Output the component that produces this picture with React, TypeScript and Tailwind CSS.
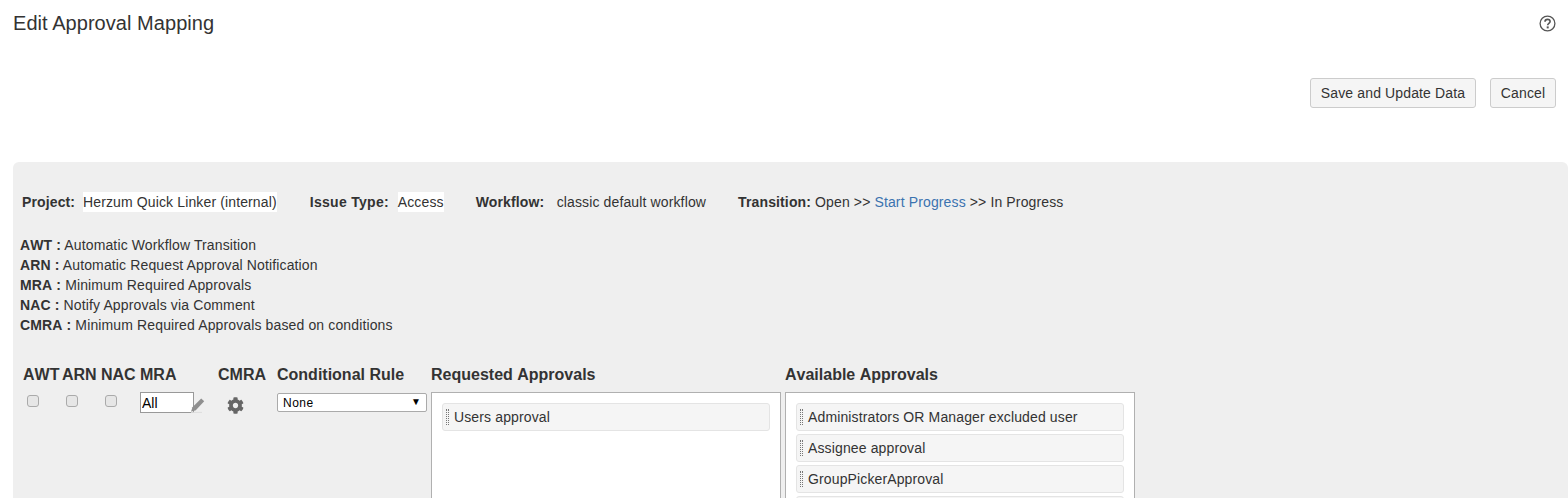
import React from 'react';
import { FaCog } from 'react-icons/fa';

// legend shown above the mapping table
const legend = [
  ['AWT', 'Automatic Workflow Transition'],
  ['ARN', 'Automatic Request Approval Notification'],
  ['MRA', 'Minimum Required Approvals'],
  ['NAC', 'Notify Approvals via Comment'],
  ['CMRA', 'Minimum Required Approvals based on conditions'],
];

const available = ['Administrators OR Manager excluded user', 'Assignee approval', 'GroupPickerApproval', ''];

const Approval = ({ label }: { label: string }) => (
  <div className="flex h-[28px] shrink-0 items-center rounded-[3px] border border-[#e4e4e4] bg-[#f5f5f5] pl-[3px]">
    <span className="h-[16px] w-[3px] border-x border-dotted border-[#777]" />
    <span className="ml-[5px]">{label}</span>
  </div>
);

const Check = () => (
  <div className="pl-[4px] pt-[3px]">
    <input type="checkbox" className="block h-[12px] w-[12px] appearance-none rounded-[3px] border border-[#aaa] bg-[#e6e6e6]" />
  </div>
);

const App = () => {
  return (
    <div className="h-[498px] overflow-hidden bg-white font-['Liberation_Sans',Arial,sans-serif] text-[14px] leading-[20px] tracking-[0.13px] text-[#333]">
      <div className="flex h-[46px] items-center justify-between pl-[13px] pr-[12px]">
        <h1 className="text-[20px] leading-[22px] tracking-[0.05px]">Edit Approval Mapping</h1>
        <svg width="17" height="17" viewBox="0 0 17 17" fill="none" className="text-[#555]">
          <circle cx="8.5" cy="8.5" r="7.4" stroke="currentColor" strokeWidth="1.3" />
          <path d="M6 6.7c0-1.5 1.1-2.3 2.5-2.3s2.6.8 2.6 2.1c0 1.9-2.4 1.9-2.4 3.7" stroke="currentColor" strokeWidth="1.6" />
          <rect x="7.7" y="11.4" width="2" height="2" fill="currentColor" />
        </svg>
      </div>

      <div className="mt-[32px] flex justify-end gap-[14px] pr-[12px]">
        <button className="h-[30px] w-[166px] rounded-[3px] border border-[#ccc] bg-[#f5f5f5]">Save and Update Data</button>
        <button className="h-[30px] w-[66px] rounded-[3px] border border-[#ccc] bg-[#f5f5f5]">Cancel</button>
      </div>

      <div className="ml-[13px] mt-[54px] h-[400px] rounded-t-[6px] bg-[#efefef] pt-[30px]">
        <div className="flex h-[20px] items-center pl-[9px] leading-[20px]">
          <b className="w-[53px] whitespace-nowrap">Project:</b>
          <span className="ml-[8px] bg-white">Herzum Quick Linker (internal)</span>
          <b className="ml-[33px] w-[79px] whitespace-nowrap tracking-[0.3px]">Issue Type:</b>
          <span className="ml-[9px] bg-white">Access</span>
          <b className="ml-[32px] w-[69px] whitespace-nowrap">Workflow:</b>
          <span className="ml-[12px]">classic default workflow</span>
          <b className="ml-[32px] w-[73px] whitespace-nowrap">Transition:</b>
          <span className="ml-[4px]">Open &gt;&gt; <span className="text-[#3b73af]">Start Progress</span> &gt;&gt; In Progress</span>
        </div>

        <div className="mt-[23px] pl-[7px]">
          {legend.map(([code, text]) => (
            <div key={code}><b className="[font-kerning:none]">{code} :</b> {text}</div>
          ))}
        </div>

        <div className="mt-[29px] grid grid-cols-[39px_39px_39px_78px_59px_154px_354px_350px] pl-[10px]">
          {['AWT', 'ARN', 'NAC', 'MRA', 'CMRA', 'Conditional Rule', 'Requested Approvals', 'Available Approvals'].map((h) => (
            <div key={h} className="h-[28px] whitespace-nowrap text-[16px] font-bold leading-[22px] tracking-normal [font-kerning:none]">{h}</div>
          ))}
          <Check />
          <Check />
          <Check />
          <div className="flex items-start">
            <input defaultValue="All" className="h-[21px] w-[54px] border border-[#999] bg-white pl-[1px] text-[14px] tracking-normal text-black outline-none" />
            <svg width="15" height="15" viewBox="0 0 15 15" className="-ml-[4px] mt-[6px]">
              <path d="M11.2.6l3 2.6-8.4 9-4.8 1.6 1.4-4.6z" fill="#8f8f8f" />
              <path d="M1 14.4h11" stroke="#ddd" strokeWidth="1" />
            </svg>
          </div>
          <div className="pl-[9px] pt-[5px]"><FaCog className="h-[17px] w-[17px] text-[#666]" /></div>
          <div className="pt-[1px]">
            <div className="relative flex h-[19px] w-[150px] items-center rounded-[2px] border border-[#aaa] bg-white pl-[5px] text-[12px] tracking-[0.5px] text-black">
              None
              <span className="absolute right-[5px] top-[3px] text-[10px] leading-[10px] tracking-normal">▼</span>
            </div>
          </div>
          <div className="flex h-[200px] w-[350px] flex-col border border-[#b0b0b0] bg-white px-[10px] pt-[10px]">
            <Approval label="Users approval" />
          </div>
          <div className="flex h-[200px] w-[350px] flex-col gap-[3px] border border-[#b0b0b0] bg-white px-[10px] pt-[10px]">
            {available.map((a, i) => <Approval key={i} label={a} />)}
          </div>
        </div>
      </div>
    </div>
  );
};

export default App;
